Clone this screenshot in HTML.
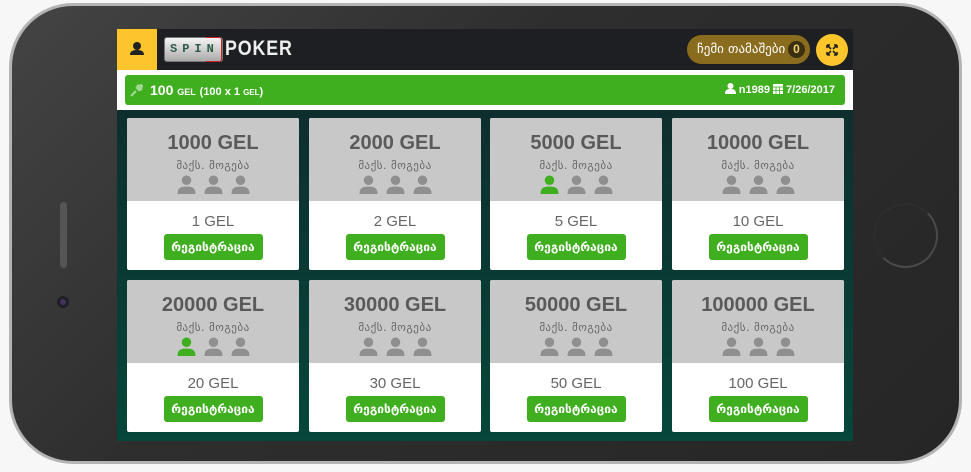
<!DOCTYPE html>
<html><head><meta charset="utf-8"><style>
*{margin:0;padding:0;box-sizing:border-box}
body{width:971px;height:472px;background:#f7f7f7;position:relative;overflow:hidden;font-family:"Liberation Sans","DejaVu Sans",sans-serif}
.phone{position:absolute;left:9px;top:3px;width:953px;height:461px;border-radius:64px;background:#b4b4b4;}
.phone2{position:absolute;left:12px;top:6px;width:947px;height:455px;border-radius:61px;background:linear-gradient(135deg,#444 0%,#2e2e2e 40%,#262626 100%);}
.spk{position:absolute;left:60px;top:202px;width:7px;height:66px;border-radius:4px;background:#555;}
.cam{position:absolute;left:57px;top:296px;width:12px;height:12px;border-radius:50%;background:#1f1f25;}
.cam:after{content:"";position:absolute;left:3px;top:3px;width:6px;height:6px;border-radius:50%;background:#403458}
.home{position:absolute;left:873px;top:203px;width:65px;height:65px;border-radius:50%;border:2px solid #4a4a4a;border-left-color:#2c2c2c;border-top-color:#2e2e2e}
.screen{position:absolute;left:117px;top:29px;width:736px;height:412px;background:linear-gradient(#10282a,#06473a);overflow:hidden}
.hdr{position:absolute;left:0;top:0;width:736px;height:41px;background:#1e1f23}
.usr{position:absolute;left:0;top:0;width:40px;height:41px;background:#fcc52b}
.logo{position:absolute;left:47px;top:8px;width:59px;height:25px;border-radius:3px;background:linear-gradient(#f4f4f4,#aaa);border:1px solid #777;font:bold 12px "Liberation Mono",monospace;color:#2e5a46;letter-spacing:5px;padding-left:5px;line-height:23px}
.logo i{position:absolute;right:0;top:-1px;width:16px;height:25px;border:1px solid #c22;border-left:none;border-radius:0 3px 3px 0}
.pk{position:absolute;left:108px;top:8px;color:#eee;font:bold 21px "Liberation Sans Narrow","Liberation Sans",sans-serif;transform:scaleX(.85);transform-origin:left;letter-spacing:1px}
.my{position:absolute;left:570px;top:6px;width:123px;height:29px;border-radius:15px;background:#8a6c1f;color:#fff;font:13px "DejaVu Sans",sans-serif;line-height:29px;padding-left:10px}
.my b{position:absolute;right:5px;top:6px;width:17px;height:17px;border-radius:50%;background:#3a2f10;color:#f5d36b;font:bold 12px "Liberation Sans";line-height:17px;text-align:center}
.fs{position:absolute;left:699px;top:5px;width:32px;height:32px;border-radius:50%;background:#fcc52b}
.wb{position:absolute;left:0;top:41px;width:736px;height:40px;background:#fff}
.gb{position:absolute;left:8px;top:46px;width:720px;height:30px;border-radius:3px;background:#3fae1f;color:#fff;font-weight:bold;line-height:30px}
.card{position:absolute;width:172px;height:152px;background:#fff;border-radius:2px;overflow:hidden;text-align:center}
.top{height:83px;background:#c8c8c8;padding-top:13px}
.t{font-size:20px;font-weight:bold;color:#5a5a5a;line-height:24px}
.s{font:11px "DejaVu Sans",sans-serif;color:#666;margin-top:4px;letter-spacing:.5px}
.ic{margin-top:3px;height:20px}
.ic svg{margin:0 4px}
.pr{font-size:15px;color:#666;margin-top:12px;line-height:18px}
.btn{display:inline-block;margin-top:3px;width:99px;height:26px;border-radius:3px;background:#3fae1f;color:#fff;font:bold 12px "DejaVu Sans",sans-serif;line-height:26px}
</style></head><body>
<div class="phone"></div><div class="phone2"></div>
<div class="spk"></div><div class="cam"></div><div class="home"></div>
<div class="screen">
<div class="hdr">
<div class="usr"><svg width="40" height="41" viewBox="0 0 40 41"><circle cx="20" cy="17" r="4" fill="#222"/><path d="M13 26c0-4 3-5 7-5s7 1 7 5z" fill="#222"/></svg></div>
<div class="logo">SPIN<i></i></div>
<div class="pk">POKER</div>
<div class="my">ჩემი თამაშები<b>0</b></div>
<div class="fs"><svg width="32" height="32" viewBox="0 0 32 32" stroke="#222" stroke-width="1.6" fill="none"><path d="M11 11l4 4M11 11h3M11 11v3M21 11l-4 4M21 11h-3M21 11v3M11 21l4-4M11 21h3M11 21v-3M21 21l-4-4M21 21h-3M21 21v-3"/></svg></div>
</div>
<div class="wb"></div>
<div class="gb">
<svg style="position:absolute;left:5px;top:8px" width="14" height="14" viewBox="0 0 14 14"><path d="M1 13l5-5M6 4l4 4M7 2l5 5M8 3l3-1 1 1-1 3z" stroke="#a6d89a" stroke-width="2" fill="none"/></svg>
<span style="position:absolute;left:25px;font-size:14px">100 <small style="font-size:9px">GEL</small> <span style="font-size:11px">(100 x 1 <small style="font-size:8px">GEL</small>)</span></span>
<span style="position:absolute;right:10px;font-size:11px"><svg width="11" height="11" viewBox="0 0 11 11" style="vertical-align:-1px"><circle cx="5.5" cy="3" r="3" fill="#fff"/><path d="M0 11c0-4 2-5 5.5-5s5.5 1 5.5 5z" fill="#fff"/></svg> n1989 <svg width="10" height="11" viewBox="0 0 10 11" style="vertical-align:-1px"><rect x="0" y="1" width="10" height="10" fill="#fff"/><path d="M0 4h10M3 4v7M6.5 4v7M0 7.5h10" stroke="#3fae1f" stroke-width=".8"/></svg> 7/26/2017</span>
</div>
</div>
<div id="cards"></div>
<script>
var d=[["1000","1",0],["2000","2",0],["5000","5",1],["10000","10",0],["20000","20",1],["30000","30",0],["50000","50",0],["100000","100",0]];
var xs=[127,309,490,672],ys=[118,280],h="";
function p(c){return '<svg width="19" height="19" viewBox="0 0 17 18"><circle cx="8.5" cy="5" r="4.5" fill="'+c+'"/><path d="M0 18c0-6 3-7 8.5-7s8.5 1 8.5 7z" fill="'+c+'"/></svg>';}
d.forEach(function(e,i){var g="#8f8f8f";h+='<div class="card" style="left:'+xs[i%4]+'px;top:'+ys[i>>2]+'px"><div class="top"><div class="t">'+e[0]+' GEL</div><div class="s">მაქს. მოგება</div><div class="ic">'+p(e[2]?"#3fae1f":g)+p(g)+p(g)+'</div></div><div class="pr">'+e[1]+' GEL</div><div class="btn">რეგისტრაცია</div></div>';});
document.getElementById("cards").innerHTML=h;
</script>
</body></html>
